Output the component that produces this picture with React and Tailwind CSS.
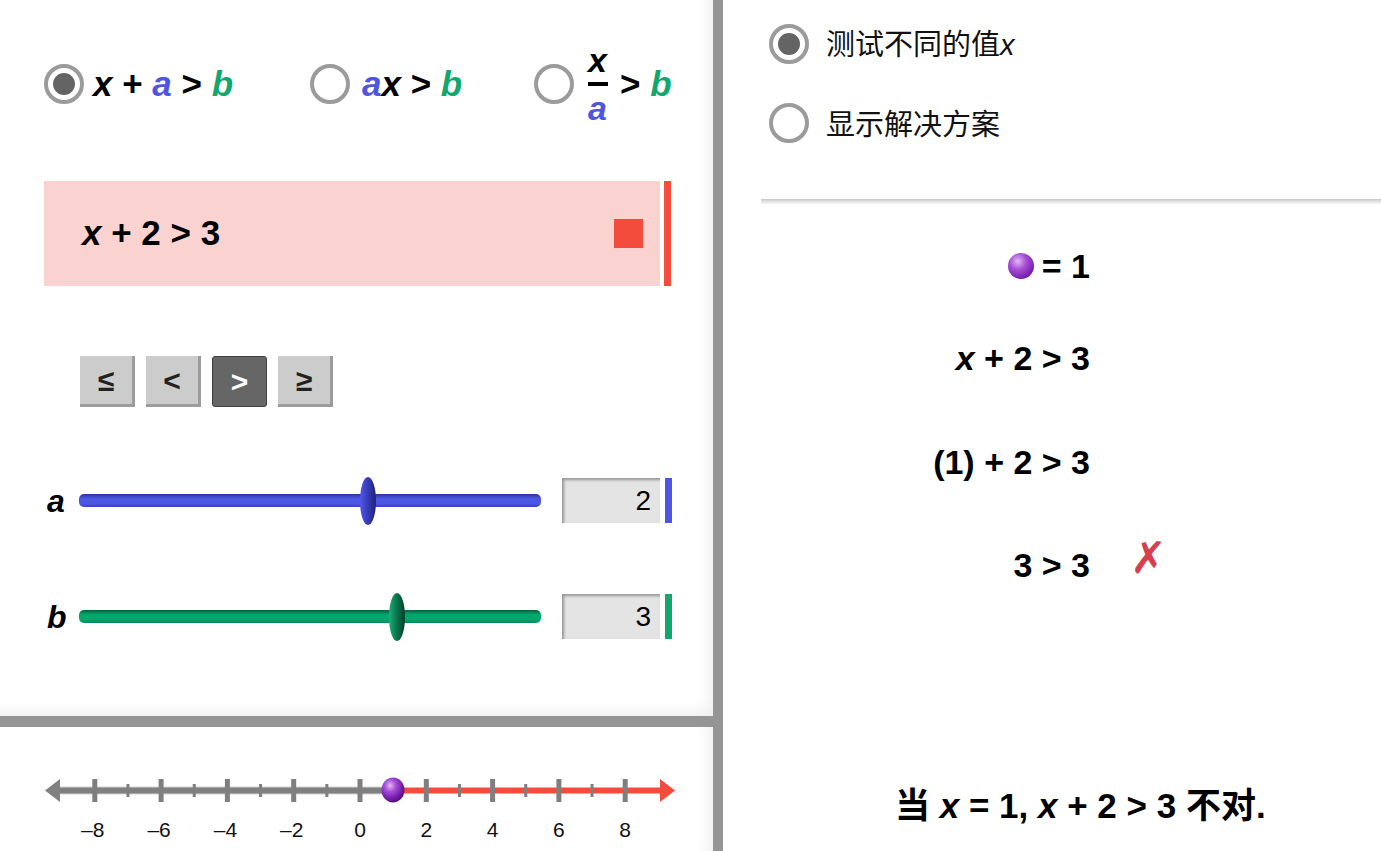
import React from "react";

const F = { fontFamily: '"Liberation Sans", Arial, sans-serif' };
const CJK = { fontFamily: '"Liberation Sans", "Noto Sans CJK SC", sans-serif' };

function Radio({ checked }) {
  return (
    <div className="w-[40px] h-[40px] rounded-full border-[4px] border-[#9b9b9b] bg-white flex items-center justify-center shrink-0">
      {checked && <div className="w-[22px] h-[22px] rounded-full bg-[#646464]" />}
    </div>
  );
}

function Ball({ size }) {
  return (
    <div
      className="rounded-full bg-[radial-gradient(circle_at_38%_32%,#e4b8f5_0%,#a64fd6_35%,#7a22b0_70%,#4f0f78_100%)]"
      style={{ width: size, height: size }}
    />
  );
}

function Btn({ children, active }) {
  if (active)
    return (
      <div className="w-[55px] h-[51px] bg-[#666666] border border-[#3f3f3f] rounded-[3px] flex items-center justify-center text-white text-[30px] font-bold">
        {children}
      </div>
    );
  return (
    <div className="w-[55px] h-[51px] bg-[#cccccc] border-r-[3px] border-b-[3px] border-[#9c9c9c] flex items-center justify-center text-[#222] text-[30px] font-bold">
      {children}
    </div>
  );
}

function Slider({ label, pos, track, thumb, bar, value }) {
  return (
    <div className="flex items-center h-[45px]">
      <div className="w-[35px] pl-[3px] text-[32px] font-bold italic text-black">{label}</div>
      <div className="relative w-[462px] h-[45px] flex items-center">
        <div className={`w-full h-[13px] rounded-[5px] ${track}`} />
        <div
          className={`absolute top-[-1px] w-[16px] h-[48px] rounded-[50%] ${thumb}`}
          style={{ left: pos }}
        />
      </div>
      <div className="ml-[21px] w-[98px] h-[45px] bg-[#e4e4e4] shadow-[inset_2px_2px_3px_rgba(0,0,0,0.35)] flex items-center justify-end pr-[9px] text-[28px] text-black">
        {value}
      </div>
      <div className={`ml-[5px] w-[7px] h-[45px] ${bar}`} />
    </div>
  );
}

function NumberLine() {
  const zero = 360;
  const u = 33.15;
  const ticks = [];
  for (let n = -9; n <= 9; n++) {
    const x = zero + n * u;
    if (n % 2 === 0) {
      ticks.push(<rect key={n} x={x - 2.5} y={52} width={5} height={23} fill="#7f7f7f" />);
    } else if (Math.abs(n) < 9) {
      ticks.push(<rect key={n} x={x - 1.5} y={57} width={3} height={13} fill="#7f7f7f" />);
    }
  }
  const labels = [-8, -6, -4, -2, 0, 2, 4, 6, 8];
  return (
    <svg width="713" height="124" viewBox="0 0 713 124">
      <defs>
        <radialGradient id="bl" cx="38%" cy="32%" r="70%">
          <stop offset="0%" stopColor="#e4b8f5" />
          <stop offset="35%" stopColor="#a64fd6" />
          <stop offset="70%" stopColor="#7a22b0" />
          <stop offset="100%" stopColor="#4f0f78" />
        </radialGradient>
      </defs>
      <rect x="54" y="59.5" width="342" height="8" fill="#d4d4d4" />
      <rect x="54" y="60.5" width="342" height="6" fill="#808080" />
      <rect x="393" y="60.5" width="270" height="6" fill="#f44c3c" />
      <polygon points="45,63.5 60,52 60,75" fill="#808080" />
      <polygon points="675,63.5 660,52 660,75" fill="#f44c3c" />
      {ticks}
      {labels.map((l) => (
        <text
          key={l}
          x={zero + l * u + (l < 0 ? -2 : 0)}
          y={110}
          textAnchor="middle"
          fontSize="21"
          fontFamily='"Liberation Sans", Arial, sans-serif'
          fill="#111"
        >
          {l < 0 ? "\u2013" + Math.abs(l) : l}
        </text>
      ))}
      <ellipse cx="393" cy="63" rx="11.5" ry="12.5" fill="url(#bl)" />
    </svg>
  );
}

export default function App() {
  return (
    <div className="w-[1381px] h-[851px] flex bg-white overflow-hidden text-black" style={F}>
      {/* left column */}
      <div className="w-[713px] h-full flex flex-col shrink-0">
        <div className="h-[716px] shadow-[inset_-14px_-14px_14px_-10px_rgba(0,0,0,0.07)] pt-[64px] pl-[44px]">
          {/* radio row */}
          <div className="flex items-center h-[40px] text-[35px] font-bold">
            <div className="flex items-center w-[266px]">
              <Radio checked />
              <span className="ml-[9px] whitespace-pre">
                <i>x</i> + <i className="text-[#4f55e3]">a</i> &gt; <i className="text-[#10a86e]">b</i>
              </span>
            </div>
            <div className="flex items-center w-[224px]">
              <Radio />
              <span className="ml-[12px] whitespace-pre">
                <i className="text-[#4f55e3]">a</i>
                <i>x</i> &gt; <i className="text-[#10a86e]">b</i>
              </span>
            </div>
            <div className="flex items-center">
              <Radio />
              <div className="ml-[13px] flex flex-col items-center w-[21px] leading-none">
                <i className="text-[34px] leading-[28px]">x</i>
                <div className="w-[20px] h-[4px] bg-black my-[8px]" />
                <i className="text-[34px] leading-[28px] text-[#4f55e3]">a</i>
              </div>
              <span className="ml-[12px] whitespace-pre">
                &gt; <i className="text-[#10a86e]">b</i>
              </span>
            </div>
          </div>

          {/* pink box */}
          <div className="mt-[77px] flex h-[105px]">
            <div className="w-[616px] h-full bg-[#fad2cf] flex items-center justify-between pl-[38px] pr-[17px]">
              <span className="text-[35px] font-bold whitespace-pre">
                <i>x</i> + 2 &gt; 3
              </span>
              <div className="w-[29px] h-[29px] bg-[#f44c3c]" />
            </div>
            <div className="ml-[4px] w-[7px] h-full bg-[#f44c3c]" />
          </div>

          {/* buttons */}
          <div className="mt-[70px] ml-[36px] flex gap-[11px]">
            <Btn>≤</Btn>
            <Btn>&lt;</Btn>
            <Btn active>&gt;</Btn>
            <Btn>≥</Btn>
          </div>

          {/* sliders */}
          <div className="mt-[71px]">
            <Slider
              label="a"
              pos={281}
              track="bg-[linear-gradient(to_bottom,#2c32a0_0%,#4d55e4_35%,#4d55e4_75%,#3a41c0_100%)]"
              thumb="bg-[linear-gradient(to_right,#4f57e6_0%,#3a40c4_40%,#1f2275_100%)]"
              bar="bg-[#4f55e3]"
              value="2"
            />
          </div>
          <div className="mt-[71px]">
            <Slider
              label="b"
              pos={310}
              track="bg-[linear-gradient(to_bottom,#0b5e3e_0%,#00a76c_35%,#00a76c_75%,#07875a_100%)]"
              thumb="bg-[linear-gradient(to_right,#1fae78_0%,#0a7a50_45%,#043d27_100%)]"
              bar="bg-[#10a86e]"
              value="3"
            />
          </div>
        </div>
        <div className="h-[11px] bg-[#959595]" />
        <div className="flex-1 shadow-[inset_-14px_0_14px_-10px_rgba(0,0,0,0.07)]">
          <NumberLine />
        </div>
      </div>

      {/* vertical divider */}
      <div className="w-[10px] h-full bg-[#959595] shrink-0" />

      {/* right column */}
      <div className="flex-1 h-full flex flex-col pt-[24px]">
        <div className="pl-[46px] flex items-center h-[40px]">
          <Radio checked />
          <span className="ml-[17px] mt-[4px] text-[29px] text-[#111]" style={CJK}>
            测试不同的值<i>x</i>
          </span>
        </div>
        <div className="mt-[39px] pl-[46px] flex items-center h-[40px]">
          <Radio />
          <span className="ml-[17px] mt-[5px] text-[29px] text-[#111]" style={CJK}>
            显示解决方案
          </span>
        </div>
        <div className="mt-[56px] ml-[38px] h-[5px] bg-[linear-gradient(to_bottom,#c4c4c4,#e2e2e2,#f6f6f6)]" />

        <div className="text-[34px] font-bold">
          <div className="mt-[42px] w-[367px] h-[40px] flex items-center justify-end">
            <Ball size={26} />
            <span className="ml-[8px] whitespace-pre">= 1</span>
          </div>
          <div className="mt-[52px] w-[367px] h-[40px] flex items-center justify-end whitespace-pre">
            <span>
              <i>x</i> + 2 &gt; 3
            </span>
          </div>
          <div className="mt-[64px] w-[367px] h-[40px] flex items-center justify-end whitespace-pre">
            <span>(1) + 2 &gt; 3</span>
          </div>
          <div className="mt-[63px] h-[40px] flex items-center">
            <div className="w-[367px] text-right whitespace-pre">3 &gt; 3</div>
            <span
              className="ml-[40px] -mt-[14px] text-[44px] font-normal text-[#d6404c]"
              style={{ fontFamily: '"DejaVu Sans", sans-serif' }}
            >
              ✗
            </span>
          </div>
          <div className="mt-[201px] h-[40px] flex items-center pl-[172px] whitespace-pre text-[35px]" style={CJK}>
            <span>
              当 <i>x</i> = 1, <i>x</i> + 2 &gt; 3 不对.
            </span>
          </div>
        </div>
      </div>
    </div>
  );
}
